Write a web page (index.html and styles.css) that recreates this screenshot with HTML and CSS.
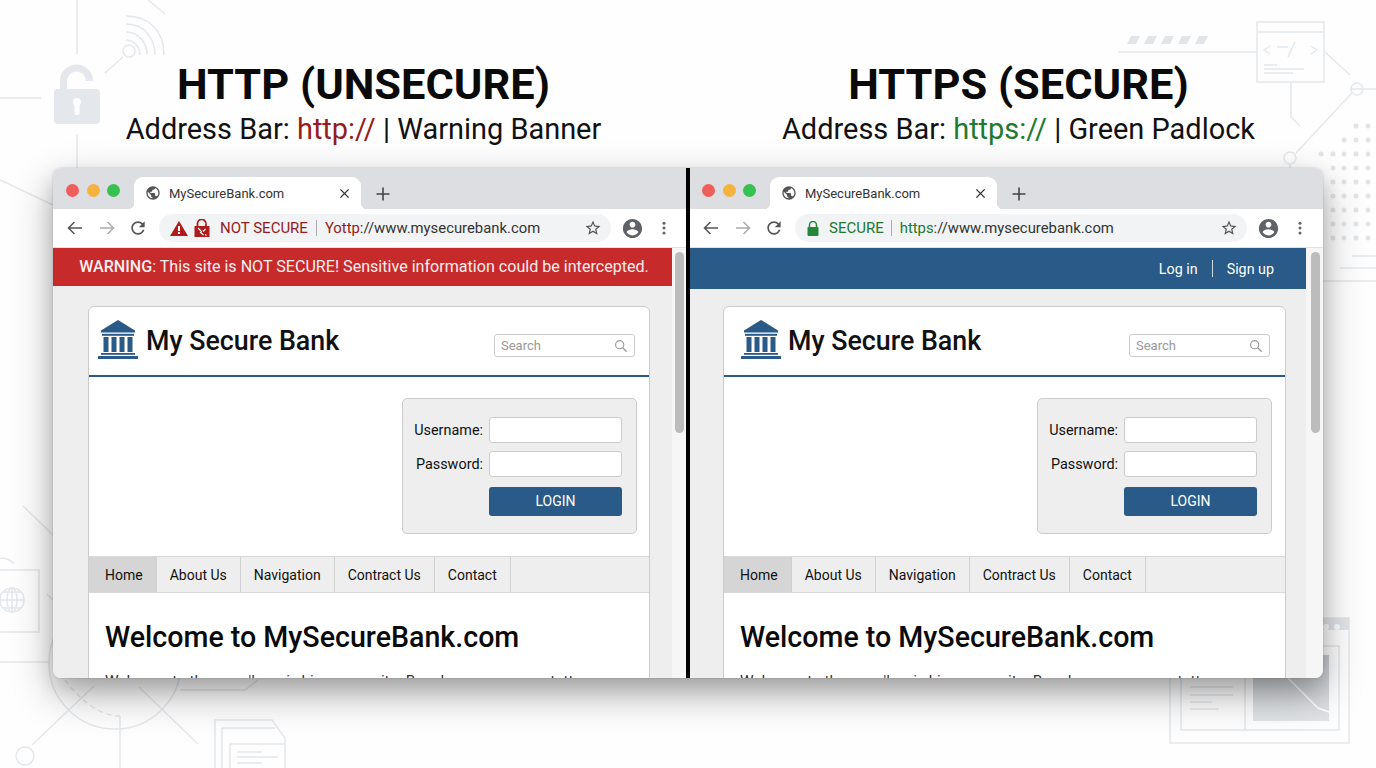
FILE: index.html
```html
<!DOCTYPE html>
<html lang="en">
<head>
  <meta charset="UTF-8" />
  <title>HTTP vs HTTPS</title>
  <link rel="stylesheet" href="styles.css">
</head>
<body>
  <svg class="icon-defs" width="0" height="0">
    <symbol id="i-globe" viewBox="0 0 24 24"><path d="M12 2C6.48 2 2 6.48 2 12s4.48 10 10 10 10-4.48 10-10S17.52 2 12 2zm-1 17.93c-3.95-.49-7-3.85-7-7.93 0-.62.08-1.21.21-1.79L9 15v1c0 1.1.9 2 2 2v1.93zm6.9-2.54c-.26-.81-1-1.39-1.9-1.39h-1v-3c0-.55-.45-1-1-1H8v-2h2c.55 0 1-.45 1-1V7h2c1.1 0 2-.9 2-2v-.41c2.93 1.19 5 4.06 5 7.41 0 2.08-.8 3.97-2.1 5.39z"/></symbol>
    <symbol id="i-close" viewBox="0 0 12 12"><path d="M1.500 1.500l9 9M10.500 1.500l-9 9" fill="none" stroke="currentColor" stroke-width="1.500"/></symbol>
    <symbol id="i-plus" viewBox="0 0 14 14"><path d="M7 0.500v13M0.500 7h13" fill="none" stroke="currentColor" stroke-width="1.600"/></symbol>
    <symbol id="i-back" viewBox="0 0 18 18"><path d="M16 9H2.500M8.500 3L2.500 9l6 6" fill="none" stroke="currentColor" stroke-width="1.500"/></symbol>
    <symbol id="i-forward" viewBox="0 0 18 18"><path d="M2 9h13.500M9.500 3l6 6-6 6" fill="none" stroke="currentColor" stroke-width="1.500"/></symbol>
    <symbol id="i-reload" viewBox="0 0 24 24"><path d="M17.65 6.35C16.2 4.9 14.21 4 12 4c-4.42 0-7.99 3.58-7.99 8s3.57 8 7.99 8c3.73 0 6.84-2.55 7.73-6h-2.08c-.82 2.33-3.04 4-5.65 4-3.31 0-6-2.69-6-6s2.69-6 6-6c1.66 0 3.14.69 4.22 1.78L13 11h7V4l-2.35 2.35z"/></symbol>
    <symbol id="i-star" viewBox="0 0 24 24"><path d="M22 9.24l-7.19-.62L12 2 9.19 8.63 2 9.24l5.46 4.73L5.82 21 12 17.27 18.18 21l-1.63-7.03L22 9.24zM12 15.4l-3.76 2.27 1-4.28-3.32-2.88 4.38-.38L12 6.1l1.71 4.04 4.38.38-3.32 2.88 1 4.28L12 15.4z"/></symbol>
    <symbol id="i-account" viewBox="0 0 24 24"><path d="M12 2C6.48 2 2 6.48 2 12s4.48 10 10 10 10-4.48 10-10S17.52 2 12 2zm0 3c1.66 0 3 1.34 3 3s-1.34 3-3 3-3-1.34-3-3 1.34-3 3-3zm0 14.2c-2.5 0-4.71-1.28-6-3.22.03-1.99 4-3.08 6-3.08 1.99 0 5.97 1.09 6 3.08-1.29 1.94-3.5 3.22-6 3.22z"/></symbol>
    <symbol id="i-dots" viewBox="0 0 24 24"><circle cx="12" cy="5.500" r="2"/><circle cx="12" cy="12" r="2"/><circle cx="12" cy="18.500" r="2"/></symbol>
    <symbol id="i-lock" viewBox="0 0 12 15"><path d="M2.500 7V4a3.500 3.500 0 0 1 7 0v3" fill="none" stroke="currentColor" stroke-width="1.500"/><rect x="0.500" y="6" width="11" height="9" rx="1"/></symbol>
    <symbol id="i-warn" viewBox="0 0 18 15"><path d="M9 0l9 15H0z"/><path d="M8 5h2v5H8zM8 11h2v2H8z" fill="#f1f3f4"/></symbol>
    <symbol id="i-brokenlock" viewBox="0 0 16 18"><path d="M3.500 7V4.500a4.200 4.200 0 0 1 8.400 0" fill="none" stroke="currentColor" stroke-width="1.800"/><path d="M11.900 4.500V7" fill="none" stroke="currentColor" stroke-width="1.800"/><rect x="0.500" y="7" width="15" height="11" rx="0.500"/><path d="M4 9l3.500 3.500-1 1 3 2.500M11.500 10l-2.500 2.500M11 15.500l1.500 1" fill="none" stroke="#fff" stroke-width="1.100"/></symbol>
    <symbol id="i-search" viewBox="0 0 16 16"><circle cx="6.500" cy="6.500" r="4.700" fill="none" stroke="currentColor" stroke-width="1.300"/><path d="M10 10l4.500 4.500" stroke="currentColor" stroke-width="1.500"/></symbol>
    <symbol id="i-bank" viewBox="0 0 40 39"><path d="M20 0L37 10.500V12.500H3V10.500z"/><rect x="4" y="13.800" width="32" height="2"/><rect x="5.500" y="17" width="5" height="15"/><rect x="13.500" y="17" width="5" height="15"/><rect x="21.500" y="17" width="5" height="15"/><rect x="29.500" y="17" width="5" height="15"/><rect x="3" y="33" width="34" height="1.800"/><rect x="0" y="36" width="40" height="3" rx="0.500"/></symbol>
  </svg>

  <svg class="backdrop" viewBox="0 0 1376 768" width="1376" height="768">
    <defs>
      <linearGradient id="photo" x1="0" y1="0" x2="0" y2="1">
        <stop offset="0" stop-color="#c9cdd1"/>
        <stop offset="1" stop-color="#e2e5e8"/>
      </linearGradient>
    </defs>
    <g fill="none" stroke="#e4e8ec" stroke-width="1.500">
      <path d="M77 0V54M77 134V168M0 98H41M105 73L123 57M148 0L165 14M0 180L53 205"/>
      <circle cx="129" cy="51" r="6"/>
      <path d="M126 16C150 16 164 32 164 55M126 24C144 24 155 38 155 55M126 32C138 32 147 42 147 55M126 40C134 40 140 47 140 55"/>
      <path d="M1118 52H1257M1325 52L1350 75M1291 82V117L1300 126M1350 89H1376M1352 93L1296 153M1290 164V168"/>
      <rect x="1257" y="22" width="67" height="60"/>
      <path d="M1257 32H1324M1270 46L1264 50L1270 54M1277 47H1288M1295 42L1288 57M1311 46L1317 50L1311 54M1264 65H1277M1264 69H1304M1264 73H1293"/>
      <circle cx="1357" cy="89" r="6"/>
      <circle cx="1290" cy="158" r="6"/>
      <path d="M1352 256H1376M1340 268H1376M1323 281H1376"/>
      <path d="M23 506L53 535M47 594L53 600M0 662H50"/>
      <path d="M0 558C8 558 13 562 14 564M0 632H39V570H0"/>
      <circle cx="12" cy="600" r="12"/>
      <path d="M0 600H24M12 588V612M3 592H21M3 608H21"/>
      <ellipse cx="12" cy="600" rx="5" ry="12"/>
      <circle cx="115" cy="663" r="66"/>
      <path d="M65 680C80 700 100 716 120 716" stroke-dasharray="5 4"/>
      <path d="M94 686L32 745M139 687L198 744M120 716V768M180 690H245L258 680"/>
      <circle cx="25" cy="756" r="9"/>
      <path d="M215 768V720H272L285 738V768M222 768V728H275M230 768V744H285"/>
      <path d="M237 752H262M237 757H278M237 763H262"/>
      <rect x="1170" y="618" width="179" height="125"/>
      <rect x="1181" y="646" width="158" height="84"/>
      <path d="M1245 646V730M1190 687H1233M1190 695H1233M1190 702H1212M1190 709H1219"/>
      <path d="M63.500 90V81a13 13 0 0 1 26 0" stroke-width="7"/>
    </g>
    <path d="M1170 618H1349V630H1170z" fill="#e2e5e8"/>
    <circle cx="1326" cy="627" r="3" fill="#fff"/>
    <circle cx="1337" cy="627" r="3" fill="#fff"/>
    <path d="M1253 655H1329V721H1253z" fill="url(#photo)"/>
    <path d="M1288 678L1318 708L1329 712" fill="none" stroke="#fff" stroke-width="1.500"/>
    <rect x="54" y="89" width="46" height="35" rx="4" fill="#e4e8ec"/>
    <g fill="#fdfdfd">
      <circle cx="77" cy="102" r="4"/>
      <rect x="74.500" y="103" width="5" height="12" rx="1"/>
    </g>
    <g fill="#e2e5e8">
      <circle cx="1356" cy="126" r="2.500"/><circle cx="1368" cy="126" r="2.500"/>
      <circle cx="1344" cy="140" r="2.500"/><circle cx="1356" cy="140" r="2.500"/><circle cx="1368" cy="140" r="2.500"/>
      <circle cx="1321" cy="154" r="2.500"/><circle cx="1333" cy="154" r="2.500"/><circle cx="1344" cy="154" r="2.500"/><circle cx="1356" cy="154" r="2.500"/><circle cx="1368" cy="154" r="2.500"/>
      <circle cx="1333" cy="168" r="2.500"/><circle cx="1344" cy="168" r="2.500"/><circle cx="1356" cy="168" r="2.500"/><circle cx="1368" cy="168" r="2.500"/>
      <circle cx="1333" cy="182" r="2.500"/><circle cx="1344" cy="182" r="2.500"/><circle cx="1356" cy="182" r="2.500"/><circle cx="1368" cy="182" r="2.500"/>
      <circle cx="1333" cy="196" r="2.500"/><circle cx="1344" cy="196" r="2.500"/><circle cx="1356" cy="196" r="2.500"/><circle cx="1368" cy="196" r="2.500"/>
      <circle cx="1333" cy="210" r="2.500"/><circle cx="1344" cy="210" r="2.500"/><circle cx="1356" cy="210" r="2.500"/><circle cx="1368" cy="210" r="2.500"/>
      <circle cx="1333" cy="224" r="2.500"/><circle cx="1344" cy="224" r="2.500"/><circle cx="1356" cy="224" r="2.500"/><circle cx="1368" cy="224" r="2.500"/>
      <circle cx="1333" cy="238" r="2.500"/><circle cx="1344" cy="238" r="2.500"/><circle cx="1356" cy="238" r="2.500"/><circle cx="1368" cy="238" r="2.500"/>
      <path d="M1131 36H1140L1136 44H1127zM1148 36H1157L1153 44H1144zM1165 36H1174L1170 44H1161zM1182 36H1191L1187 44H1178zM1199 36H1208L1204 44H1195z"/>
    </g>
  </svg>

  <div class="titles">
    <div class="title">
      <h1>HTTP (UNSECURE)</h1>
      <p>Address Bar: <span class="red">http://</span> | Warning Banner</p>
    </div>
    <div class="title">
      <h1>HTTPS (SECURE)</h1>
      <p>Address Bar: <span class="green">https://</span> | Green Padlock</p>
    </div>
  </div>

  <div class="window">
    <!-- left: http -->
    <div class="pane pane-http">
      <div class="tabstrip">
        <div class="lights"><i class="light l-red"></i><i class="light l-yellow"></i><i class="light l-green"></i></div>
        <div class="tab">
          <svg class="tab-globe"><use href="#i-globe"/></svg>
          <span class="tab-title">MySecureBank.com</span>
          <svg class="tab-close"><use href="#i-close"/></svg>
        </div>
        <svg class="tab-new"><use href="#i-plus"/></svg>
      </div>
      <div class="toolbar">
        <svg class="tool"><use href="#i-back"/></svg>
        <svg class="tool tool-off"><use href="#i-forward"/></svg>
        <svg class="tool tool-reload"><use href="#i-reload"/></svg>
        <div class="omnibox">
          <svg class="omni-warn"><use href="#i-warn"/></svg>
          <svg class="omni-broken"><use href="#i-brokenlock"/></svg>
          <span class="omni-state red">NOT SECURE</span>
          <span class="omni-sep"></span>
          <span class="omni-url"><span class="red">Yottp</span>://www.mysecurebank.com</span>
          <svg class="omni-star"><use href="#i-star"/></svg>
        </div>
        <svg class="avatar"><use href="#i-account"/></svg>
        <svg class="menu"><use href="#i-dots"/></svg>
      </div>
      <div class="viewport">
        <div class="page">
          <div class="warning"><b>WARNING</b>: This site is NOT SECURE! Sensitive information could be intercepted.</div>
          <div class="card">
            <div class="card-head">
              <svg class="bank"><use href="#i-bank"/></svg>
              <span class="brand">My Secure Bank</span>
              <div class="search"><span>Search</span><svg><use href="#i-search"/></svg></div>
            </div>
            <div class="card-login">
              <form class="login">
                <label>Username:</label><div class="field"></div>
                <label>Password:</label><div class="field"></div>
                <div class="login-btn">LOGIN</div>
              </form>
            </div>
            <nav class="nav">
              <a class="active">Home</a><a>About Us</a><a>Navigation</a><a>Contract Us</a><a>Contact</a>
            </nav>
            <div class="content">
              <h2>Welcome to MySecureBank.com</h2>
              <p>Welcome to the mow'ls a vis hipp y cecy ita. Bonels cone, one contettery</p>
            </div>
          </div>
        </div>
        <div class="scrollbar"><div class="thumb"></div></div>
      </div>
    </div>

    <div class="split"></div>

    <!-- right: https -->
    <div class="pane pane-https">
      <div class="tabstrip">
        <div class="lights"><i class="light l-red"></i><i class="light l-yellow"></i><i class="light l-green"></i></div>
        <div class="tab">
          <svg class="tab-globe"><use href="#i-globe"/></svg>
          <span class="tab-title">MySecureBank.com</span>
          <svg class="tab-close"><use href="#i-close"/></svg>
        </div>
        <svg class="tab-new"><use href="#i-plus"/></svg>
      </div>
      <div class="toolbar">
        <svg class="tool"><use href="#i-back"/></svg>
        <svg class="tool tool-off"><use href="#i-forward"/></svg>
        <svg class="tool tool-reload"><use href="#i-reload"/></svg>
        <div class="omnibox">
          <svg class="omni-lock"><use href="#i-lock"/></svg>
          <span class="omni-state green">SECURE</span>
          <span class="omni-sep"></span>
          <span class="omni-url"><span class="green">https</span>://www.mysecurebank.com</span>
          <svg class="omni-star"><use href="#i-star"/></svg>
        </div>
        <svg class="avatar"><use href="#i-account"/></svg>
        <svg class="menu"><use href="#i-dots"/></svg>
      </div>
      <div class="viewport">
        <div class="page">
          <div class="topbar"><a>Log in</a><span class="topbar-sep"></span><a>Sign up</a></div>
          <div class="card">
            <div class="card-head">
              <svg class="bank"><use href="#i-bank"/></svg>
              <span class="brand">My Secure Bank</span>
              <div class="search"><span>Search</span><svg><use href="#i-search"/></svg></div>
            </div>
            <div class="card-login">
              <form class="login">
                <label>Username:</label><div class="field"></div>
                <label>Password:</label><div class="field"></div>
                <div class="login-btn">LOGIN</div>
              </form>
            </div>
            <nav class="nav">
              <a class="active">Home</a><a>About Us</a><a>Navigation</a><a>Contract Us</a><a>Contact</a>
            </nav>
            <div class="content">
              <h2>Welcome to MySecureBank.com</h2>
              <p>Welcome to the mow'l a vis hipp y cecy ita. Bonels cone, one contettery</p>
            </div>
          </div>
        </div>
        <div class="scrollbar"><div class="thumb"></div></div>
      </div>
    </div>
  </div>
</body>
</html>
```

FILE: styles.css
```css
* {
  box-sizing: border-box;
}
body {
  margin: 0;
  width: 1376px;
  height: 768px;
  overflow: hidden;
  position: relative;
  background-color: #fefefe;
  font-family: Roboto, sans-serif;
  color: #111;
}
.icon-defs {
  position: absolute;
}
.backdrop {
  position: absolute;
  left: 0;
  top: 0;
}
.red {
  color: #951c1c;
}
.green {
  color: #217a2e;
}

/* headings */
.titles {
  position: relative;
  display: grid;
  grid-template-columns: 655px 655px;
  padding: 60px 0 0 36px;
  height: 168px;
  text-align: center;
}
.title h1 {
  margin: 0;
  font-size: 43.400px;
  line-height: 50px;
  font-weight: 700;
  color: #0a0a0a;
}
.title p {
  margin: 0;
  font-size: 28.950px;
  line-height: 38px;
}

/* browser window */
.window {
  position: relative;
  display: flex;
  margin-left: 53px;
  width: 1270px;
  height: 510px;
  border-radius: 8px;
  overflow: hidden;
  background-color: #fff;
  box-shadow: 0 16px 42px rgba(0, 0, 0, 0.3), 0 10px 20px rgba(0, 0, 0, 0.14), 0 0 2px rgba(0, 0, 0, 0.2);
}
.pane {
  min-width: 0;
  display: flex;
  flex-direction: column;
}
.pane-http {
  width: 636px;
}
.pane-https {
  width: 634px;
}
/* the black rule sits on top of both panes */
.split {
  position: absolute;
  left: 633px;
  top: 0;
  bottom: 0;
  width: 4px;
  background-color: #000;
  z-index: 2;
}
.tabstrip {
  display: flex;
  align-items: flex-end;
  height: 41px;
  background-color: #dcdee2;
}
.lights {
  display: flex;
  gap: 7.500px;
  align-self: flex-start;
  margin: 16px 0 0 13px;
  width: 68px;
}
.light {
  width: 13px;
  height: 13px;
  border-radius: 50%;
}
.l-red { background-color: #ee5f5b; }
.l-yellow { background-color: #f5b33e; }
.l-green { background-color: #36c150; }
.tab {
  position: relative;
  display: flex;
  align-items: center;
  width: 227px;
  height: 32px;
  padding: 0 11px 0 11px;
  background-color: #fff;
  border-radius: 9px 9px 0 0;
}
.tab::before,
.tab::after {
  content: "";
  position: absolute;
  bottom: 0;
  width: 6px;
  height: 6px;
}
.tab::before {
  left: -6px;
  background: radial-gradient(circle at 0 0, transparent 6px, #fff 6.500px);
}
.tab::after {
  right: -6px;
  background: radial-gradient(circle at 100% 0, transparent 6px, #fff 6.500px);
}
.tab-globe {
  width: 16px;
  height: 16px;
  fill: #555;
  margin-right: 8px;
}
.tab-title {
  flex: 1;
  font-size: 13px;
  color: #333;
}
.tab-close {
  width: 11px;
  height: 11px;
  color: #333;
}
.tab-new {
  width: 14px;
  height: 14px;
  margin: 0 0 8px 15px;
  color: #444;
}
.toolbar {
  display: flex;
  align-items: center;
  height: 39px;
  padding-left: 13px;
  background-color: #fff;
  border-bottom: 1px solid #dfe1e4;
}
.tool {
  width: 18px;
  height: 18px;
  margin-right: 14px;
  color: #555;
  fill: #555;
}
.tool-off {
  color: #a9abae;
}
.tool-reload {
  width: 20px;
  height: 20px;
  margin: 0 11px 0 -2px;
}
.omnibox {
  display: flex;
  align-items: center;
  width: 452px;
  height: 28px;
  padding: 0 9px 0 11px;
  border-radius: 14px;
  background-color: #f1f3f4;
  font-size: 14.850px;
}
.omni-warn {
  width: 18px;
  height: 15px;
  fill: #b01c1c;
  margin-right: 6px;
}
.omni-broken {
  width: 16px;
  height: 18px;
  color: #b01c1c;
  fill: #b01c1c;
  margin-right: 10px;
}
.omni-lock {
  width: 12px;
  height: 15px;
  color: #23863a;
  fill: #23863a;
  margin: 0 10px 0 1px;
}
.omni-state {
  font-size: 15px;
}
.omni-sep {
  width: 1px;
  height: 16px;
  margin: 0 8px;
  background-color: #aaa;
}
.pane-https .omni-sep {
  margin: 0 8px 0 7px;
}
.omni-url {
  flex: 1;
  color: #333;
}
.omni-star {
  width: 18px;
  height: 18px;
  fill: #555;
}
.avatar {
  width: 23px;
  height: 23px;
  margin-left: 10px;
  fill: #5f6368;
}
.menu {
  width: 18px;
  height: 18px;
  margin-left: 11px;
  fill: #5f6368;
}

/* page inside the browser */
.viewport {
  flex: 1;
  min-height: 0;
  display: flex;
}
.page {
  flex: 1;
  min-width: 0;
  background-color: #eeeeee;
  overflow: hidden;
}
.warning {
  height: 38px;
  line-height: 38px;
  text-align: center;
  padding-left: 3px;
  margin-bottom: 20px;
  background-color: #c62a2b;
  color: #fbeeee;
  font-size: 16.100px;
  white-space: nowrap;
}
.warning b {
  font-weight: 500;
}
.topbar {
  display: flex;
  justify-content: flex-end;
  align-items: center;
  height: 41px;
  margin-bottom: 17px;
  padding-right: 32px;
  background-color: #2a5a87;
  color: #fff;
  font-size: 14.300px;
}
.topbar-sep {
  width: 1px;
  height: 17px;
  margin: 0 14px;
  background-color: #cfdbe6;
}
.scrollbar {
  flex: none;
  width: 17px;
  padding: 4px 5px 0 3px;
  background-color: #f6f6f6;
}
.pane-https .scrollbar {
  padding: 4px 3px 0 5px;
}
.thumb {
  height: 181px;
  border-radius: 5px;
  background-color: #bcbcbc;
}
.card {
  margin: 0 22px 0 35px;
  height: 420px;
  border: 1px solid #ccc;
  border-radius: 6px 6px 0 0;
  background-color: #fff;
}
.pane-https .card {
  margin: 0 20px 0 34px;
}
.card-head {
  display: flex;
  align-items: center;
  height: 70px;
  padding: 0 14px 0 9px;
  border-bottom: 2px solid #2a5a87;
}
.pane-https .card-head {
  padding: 0 15px 0 17px;
}
.bank {
  width: 40px;
  height: 39px;
  fill: #2a5a87;
  margin: -4px 8px 0 0;
}
.pane-https .bank {
  margin-right: 7px;
}
.brand {
  flex: 1;
  margin-top: 0;
  font-size: 26.800px;
  font-weight: 500;
  color: #111;
}
.search {
  display: flex;
  align-items: center;
  justify-content: space-between;
  width: 141px;
  height: 23px;
  margin-top: 9px;
  padding: 0 6px;
  border: 1px solid #ccc;
  border-radius: 3px;
  font-size: 13px;
  color: #999;
}
.search svg {
  width: 14px;
  height: 14px;
  color: #999;
}
.card-login {
  display: flex;
  justify-content: flex-end;
  height: 179px;
  padding: 21px 12px 0 0;
}
.pane-https .card-login {
  padding-right: 13px;
}
.login {
  display: grid;
  grid-template-columns: 80px 133px;
  grid-auto-rows: 26px;
  gap: 8px 6px;
  align-items: center;
  width: 235px;
  height: 136px;
  padding: 18px 14px 0 0;
  background-color: #eee;
  border: 1px solid #ccc;
  border-radius: 5px;
}
.login label {
  text-align: right;
  font-size: 14.400px;
  color: #111;
}
.field {
  height: 26px;
  background-color: #fff;
  border: 1px solid #ccc;
  border-radius: 3px;
}
.login-btn {
  grid-column: 2;
  height: 29px;
  margin-top: 6px;
  line-height: 29px;
  text-align: center;
  background-color: #2a5a87;
  border-radius: 3px;
  color: #fff;
  font-size: 14px;
}
.nav {
  display: flex;
  height: 37px;
  background-color: #eeeeee;
  border-top: 1px solid #d8d8d8;
  border-bottom: 1px solid #d8d8d8;
}
.nav a {
  padding: 0 13px;
  line-height: 37px;
  font-size: 14px;
  color: #111;
  border-right: 1px solid #d0d0d0;
}
.nav a.active {
  padding: 0 13px 0 16px;
  background-color: #d5d5d5;
}
.content {
  padding: 26px 16px 0;
}
.content h2 {
  margin: 0;
  font-size: 28.600px;
  line-height: 36px;
  font-weight: 500;
  color: #0a0a0a;
}
.content p {
  margin: 17px 0 0;
  font-size: 15.300px;
  line-height: 18px;
  color: #333;
  white-space: nowrap;
}
```
